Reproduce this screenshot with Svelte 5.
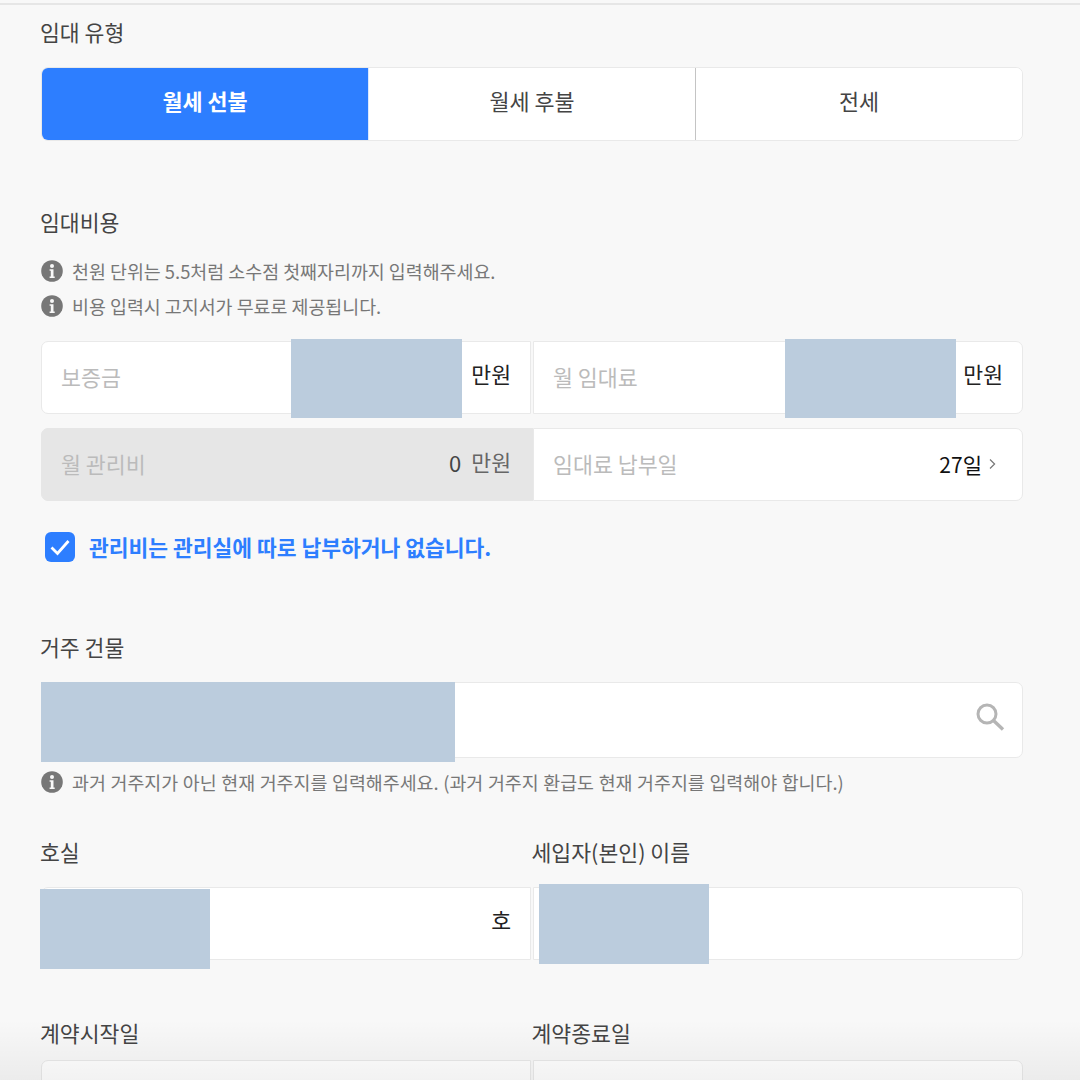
<script>
  const tabs = ['월세 선불', '월세 후불', '전세'];
  let activeTab = $state(0);
  let noFee = $state(true);
</script>

{#snippet info()}
  <svg class="info" width="22" height="22" viewBox="0 0 22 22" aria-hidden="true">
    <circle cx="11" cy="11" r="10.8" fill="#777" />
    <circle cx="11" cy="6" r="2" fill="#f8f8f8" />
    <path d="M8.6 9.2h3.9v7.2h1.2v1.6H8.6v-1.6h1.2v-5.6H8.6z" fill="#f8f8f8" />
  </svg>
{/snippet}

<div class="page">
  <div class="topline"></div>

  <h3 class="first">임대 유형</h3>
  <div class="tabs">
    {#each tabs as tab, i}
      <button class="tab" class:active={activeTab === i} onclick={() => (activeTab = i)}>{tab}</button>
    {/each}
  </div>

  <h3 class="cost">임대비용</h3>
  <p class="hint">{@render info()}천원 단위는 5.5처럼 소수점 첫째자리까지 입력해주세요.</p>
  <p class="hint second">{@render info()}비용 입력시 고지서가 무료로 제공됩니다.</p>

  <div class="row cost-row">
    <div class="cell left">
      <span class="ph">보증금</span>
      <span class="unit">만원</span>
      <div class="mask mask-fee"></div>
    </div>
    <div class="cell right">
      <span class="ph">월 임대료</span>
      <span class="unit">만원</span>
      <div class="mask mask-rent"></div>
    </div>
  </div>
  <div class="row cost-row2">
    <div class="cell left disabled">
      <span class="ph">월 관리비</span>
      <span class="unit"><b>0</b>만원</span>
    </div>
    <div class="cell right">
      <span class="ph">임대료 납부일</span>
      <span class="unit day">27일
        <svg width="9" height="12" viewBox="0 0 9 12" aria-hidden="true"><path d="M2 1.5 6.6 6 2 10.5" fill="none" stroke="#777" stroke-width="1.2" /></svg>
      </span>
    </div>
  </div>

  <button class="check" onclick={() => (noFee = !noFee)}>
    <span class="box" class:off={!noFee}>
      <svg width="30" height="30" viewBox="0 0 30 30" aria-hidden="true"><path d="M6.5 15.5l6 6 11-12.5" fill="none" stroke="#fff" stroke-width="2.8" /></svg>
    </span>
    관리비는 관리실에 따로 납부하거나 없습니다.
  </button>

  <h3 class="building">거주 건물</h3>
  <div class="cell search">
    <div class="mask mask-building"></div>
    <svg class="glass" width="30" height="30" viewBox="0 0 30 30" aria-hidden="true">
      <circle cx="12" cy="12" r="9" fill="none" stroke="#b5b5b5" stroke-width="3" />
      <path d="M18.5 18.5 28 27.5" stroke="#b5b5b5" stroke-width="3.4" />
    </svg>
  </div>
  <p class="hint third">{@render info()}과거 거주지가 아닌 현재 거주지를 입력해주세요. (과거 거주지 환급도 현재 거주지를 입력해야 합니다.)</p>

  <div class="labels room-labels">
    <h3>호실</h3>
    <h3>세입자(본인) 이름</h3>
  </div>
  <div class="row room-row">
    <div class="cell left">
      <span class="unit ho">호</span>
      <div class="mask mask-room"></div>
    </div>
    <div class="cell right">
      <div class="mask mask-name"></div>
    </div>
  </div>

  <div class="labels date-labels">
    <h3>계약시작일</h3>
    <h3>계약종료일</h3>
  </div>
  <div class="row date-row">
    <div class="cell left"></div>
    <div class="cell right"></div>
  </div>

  <div class="shade"></div>
</div>

<style>
  :global(body) {
    margin: 0;
    background: #f8f8f8;
  }

  .page {
    position: relative;
    height: 1080px;
    overflow: hidden;
    box-sizing: border-box;
    padding: 0 57px 0 41px;
    background: #f8f8f8;
    color: #444;
    font-family: "Noto Sans CJK KR", "Noto Sans", sans-serif;
  }

  .topline {
    height: 2px;
    margin: 3px -57px 0 -41px;
    background: #e6e6e6;
  }

  h3 {
    margin: 0;
    font-size: 21.6px;
    line-height: 30px;
    font-weight: 400;
    color: #444;
  }

  h3.first { margin: 12px 0 0 -1px; }

  .tabs {
    display: flex;
    margin-top: 20px;
    height: 74px;
    box-sizing: border-box;
    border: 1.5px solid #e9e9e9;
    border-radius: 7px;
    background: #fff;
    overflow: hidden;
  }

  .tab {
    flex: 1;
    border: 0;
    border-left: 1.5px solid #c4c4c4;
    background: #fff;
    color: #444;
    font: 400 21.8px "Noto Sans CJK KR", sans-serif;
    padding: 0 0 7px;
  }

  .tab:first-child { border-left: 0; }

  .tab.active {
    background: #2d7eff;
    color: #fff;
    font-weight: 700;
  }

  .tab.active + .tab { border-left: 1px solid #dbe8ff; }

  h3.cost { margin: 66px 0 0 -1px; }

  .hint {
    display: flex;
    align-items: center;
    gap: 9px;
    margin: 23px 0 0;
    height: 22px;
    font-size: 18.4px;
    line-height: 22px;
    color: #777;
    white-space: nowrap;
  }

  .hint.second { margin-top: 13px; }

  .hint.third {
    margin-top: 13px;
    word-spacing: 0.5px;
  }

  .info { flex-shrink: 0; }

  .row {
    display: grid;
    grid-template-columns: 1fr 1fr;
    gap: 2px;
  }

  .cost-row { margin-top: 24px; }
  .cost-row2 { margin-top: 14px; }

  .cell {
    position: relative;
    display: flex;
    align-items: center;
    justify-content: space-between;
    box-sizing: border-box;
    height: 73px;
    padding: 0 19px 0 19px;
    background: #fff;
    border: 1.5px solid #e9e9e9;
    font-size: 21.7px;
  }

  .left {
    border-radius: 7px 0 0 7px;
    border-right-width: 1px;
  }

  .right {
    border-radius: 0 7px 7px 0;
    border-left-width: 1px;
  }

  .ph {
    color: #bbb;
    margin-top: -3px;
  }

  .unit {
    display: flex;
    align-items: center;
    color: #222;
    font-size: 21.6px;
    margin-top: -8px;
  }

  .disabled {
    background: #e6e6e6;
    border-color: #e6e6e6;
    box-shadow: 2px 0 0 #e6e6e6;
  }

  .disabled .unit {
    color: #666;
    margin-top: -6px;
  }

  .disabled .unit b {
    font-weight: 400;
    color: #444;
    margin-right: 10px;
    font-size: 22px;
  }

  .day {
    gap: 6px;
    margin-right: 6px;
    margin-top: -2px;
    color: #111;
    font-size: 21px;
  }

  .mask {
    position: absolute;
    background: #bbccdd;
    width: 171px;
    height: 79px;
  }

  .mask-fee { left: 249px; top: -3px; }
  .mask-rent { left: 251px; top: -3px; }
  .mask-building { left: -1px; top: -1px; width: 414px; height: 80px; }
  .mask-room { left: -2px; top: 1px; width: 170px; height: 80px; }
  .mask-name { left: 5px; top: -4px; width: 170px; height: 80px; }

  .check {
    display: flex;
    align-items: center;
    gap: 14px;
    margin: 31px 0 0 4px;
    padding: 0;
    border: 0;
    background: none;
    color: #2d7eff;
    font: 700 21.5px "Noto Sans CJK KR", sans-serif;
    line-height: 30px;
  }

  .box {
    display: block;
    width: 30px;
    height: 30px;
    border-radius: 6px;
    background: #2d7eff;
  }

  .box.off { background: #ccc; }

  h3.building { margin: 70px 0 0 -1px; }

  .search {
    margin-top: 20px;
    height: 76px;
    border-radius: 7px;
  }

  .glass {
    position: absolute;
    right: 17px;
    top: 19px;
  }

  .labels {
    display: flex;
    margin-left: -1px;
  }

  .labels h3 { width: 492px; }

  .room-labels { margin-top: 44px; }
  .room-row { margin-top: 20px; }
  .ho { margin-left: auto; }
  .date-labels { margin-top: 58px; }
  .date-row { margin-top: 12px; }

  .shade {
    position: absolute;
    left: 0;
    right: 0;
    bottom: 0;
    height: 60px;
    background: linear-gradient(to bottom, rgba(0, 0, 0, 0), rgba(0, 0, 0, 0.05));
    pointer-events: none;
  }
</style>
